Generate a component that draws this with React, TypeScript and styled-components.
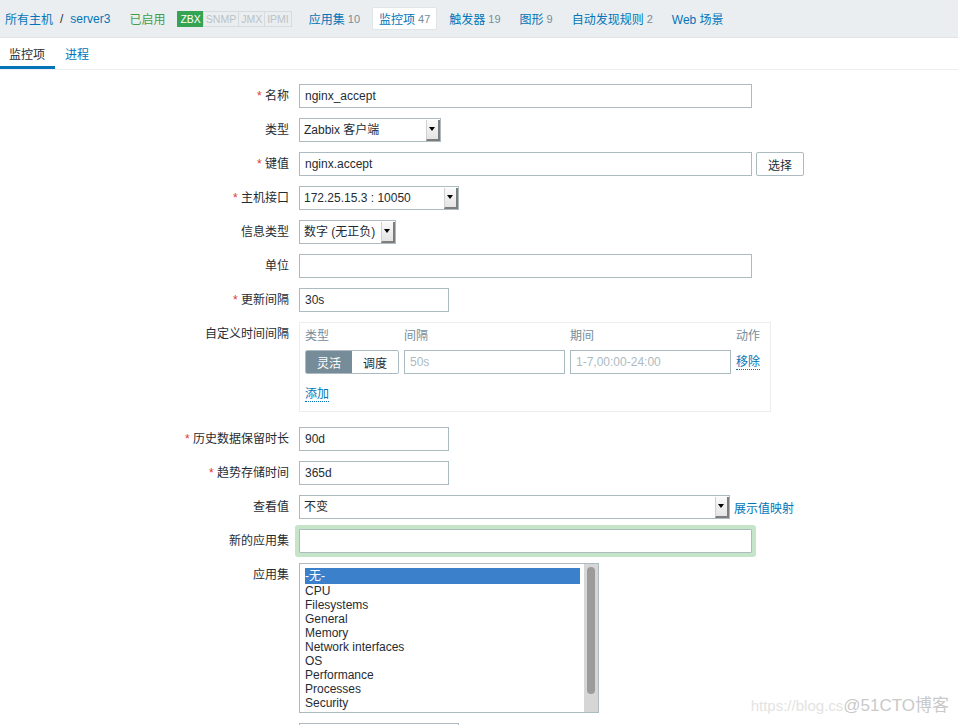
import React from 'react';
import styled, { createGlobalStyle, css } from 'styled-components';

const TEXT = '#1f2c33';
const LINK = '#0275b8';
const MUTED = '#768d99';
const BORDER = '#acbbc2';

const GlobalStyle = createGlobalStyle`
  body {
    margin: 0;
    background: #fff;
    font-family: "Liberation Sans", "Noto Sans CJK SC", sans-serif;
    font-size: 12px;
    color: ${TEXT};
  }
`;

const Page = styled.div`
  position: relative;
  width: 958px;
  height: 725px;
  overflow: hidden;
`;

const TopBar = styled.div`
  display: flex;
  align-items: center;
  height: 37px;
  padding: 0 5px;
  background: #ebeef0;
  border-bottom: 1px solid #dfe4e7;
`;

const Crumbs = styled.div`
  display: flex;
  align-items: center;
  gap: 7px;
`;

const Link = styled.a`
  color: ${LINK};
  text-decoration: none;
  cursor: pointer;
`;

const Status = styled.span`
  margin-left: 19px;
  color: #429e47;
`;

const BadgeGroup = styled.div`
  display: flex;
  margin-left: 12px;
  height: 16px;
`;

const Badge = styled.span<{ $on?: boolean }>`
  display: flex;
  align-items: center;
  padding: 0 2px;
  font-size: 10.5px;
  border: 1px solid #d5dbde;
  margin-left: -1px;
  color: #b8c3c9;
  ${(p) => p.$on && css`
    background: #34a352;
    border-color: #34a352;
    color: #fff;
    margin-left: 0;
  `}
`;

const Nav = styled.div`
  display: flex;
  align-items: center;
  gap: 5px;
  margin-left: 10px;
`;

const NavItem = styled.a<{ $selected?: boolean }>`
  display: flex;
  align-items: center;
  height: 21px;
  padding: 0 6px;
  border: 1px solid transparent;
  border-radius: 2px;
  color: ${LINK};
  ${(p) => p.$selected && css`
    background: #fff;
    border-color: #dfe4e7;
  `}
`;

const Count = styled.span`
  margin-left: 3px;
  font-size: 11px;
  color: ${MUTED};
`;

const TabBar = styled.div`
  display: flex;
  height: 31px;
  border-bottom: 1px solid #ebeef0;
`;

const Tab = styled.a<{ $active?: boolean }>`
  display: flex;
  align-items: center;
  padding: 0 10px 0 9px;
  margin-right: 1px;
  color: ${(p) => (p.$active ? TEXT : LINK)};
  border-bottom: 3px solid ${(p) => (p.$active ? LINK : 'transparent')};
  padding-top: 3px;
`;

const Form = styled.div`
  display: grid;
  grid-template-columns: 289px 1fr;
  column-gap: 10px;
  row-gap: 10px;
  padding-top: 14px;
`;

const Label = styled.div<{ $required?: boolean }>`
  text-align: right;
  line-height: 24px;
  white-space: nowrap;
  &::before {
    content: ${(p) => (p.$required ? '"* "' : 'none')};
    color: #e33734;
  }
`;

const Field = styled.div`
  display: flex;
  align-items: center;
  gap: 4px;
  min-height: 24px;
`;

const Input = styled.div<{ $w: number; $muted?: boolean; $glow?: boolean }>`
  box-sizing: border-box;
  width: ${(p) => p.$w}px;
  height: 24px;
  line-height: 22px;
  padding: 0 5px;
  border: 1px solid ${BORDER};
  background: #fff;
  color: ${(p) => (p.$muted ? BORDER : TEXT)};
  white-space: nowrap;
  ${(p) => p.$glow && css`
    box-shadow: 0 0 0 4px #c5e4c8;
    border-radius: 1px;
  `}
`;

const Button = styled.button`
  box-sizing: border-box;
  height: 24px;
  width: 48px;
  padding: 0;
  border: 1px solid ${BORDER};
  border-radius: 2px;
  background: #fff;
  color: ${TEXT};
  font: inherit;
`;

const SelectBox = styled.div<{ $w: number }>`
  box-sizing: border-box;
  display: flex;
  width: ${(p) => p.$w}px;
  height: 24px;
  border: 1px solid ${BORDER};
  background: #fff;
`;

const SelectText = styled.span`
  flex: 1;
  line-height: 22px;
  padding-left: 4px;
  white-space: nowrap;
`;

const SelectArrow = styled.span`
  position: relative;
  width: 11px;
  margin: 1px 0 0;
  background: linear-gradient(#fafafa, #e4e4e4);
  border-left: 1px solid #d0d0d0;
  border-right: 2px solid #7d7d7d;
  border-bottom: 2px solid #7d7d7d;
  &::after {
    content: '';
    position: absolute;
    left: 2px;
    top: 7px;
    border-left: 3.5px solid transparent;
    border-right: 3.5px solid transparent;
    border-top: 4px solid #000;
  }
`;

const DottedLink = styled.a`
  color: ${LINK};
  border-bottom: 1px dotted ${LINK};
  line-height: 14px;
  cursor: pointer;
`;

const IntervalBox = styled.div`
  box-sizing: border-box;
  width: 472px;
  height: 90px;
  margin-bottom: 5px;
  padding: 5px 5px 0;
  border: 1px solid #ebeef0;
`;

const IntervalGrid = styled.div`
  display: grid;
  grid-template-columns: 94px 161px 161px 1fr;
  column-gap: 5px;
  row-gap: 5px;
  align-items: center;
`;

const HeadCell = styled.div`
  color: ${MUTED};
  line-height: 17px;
`;

const Segmented = styled.div`
  display: flex;
  height: 24px;
  border: 1px solid ${BORDER};
  box-sizing: border-box;
  border-radius: 2px;
  overflow: hidden;
`;

const Segment = styled.span<{ $on?: boolean }>`
  flex: 1;
  display: flex;
  align-items: center;
  justify-content: center;
  background: ${(p) => (p.$on ? MUTED : '#fff')};
  color: ${(p) => (p.$on ? '#fff' : TEXT)};
`;

const AddRow = styled.div`
  margin-top: 13px;
`;

const ListBox = styled.div`
  box-sizing: border-box;
  display: flex;
  width: 300px;
  height: 150px;
  border: 1px solid ${BORDER};
  background: #fff;
`;

const Options = styled.div`
  flex: 1;
  padding: 4px 4px 0 5px;
  overflow: hidden;
`;

const Option = styled.div<{ $selected?: boolean }>`
  line-height: 14px;
  white-space: nowrap;
  ${(p) => p.$selected && css`
    line-height: 16px;
    background: #3a80cb;
    color: #fff;
  `}
`;

const Track = styled.div`
  width: 14px;
  background: #d6d6d6;
  padding: 3px 3px;
  box-sizing: border-box;
`;

const Thumb = styled.div`
  height: 127px;
  border-radius: 4px;
  background: #9b9b9b;
`;

const Watermark = styled.div`
  position: absolute;
  right: 9px;
  bottom: 9px;
  display: flex;
  align-items: baseline;
  font-size: 15px;
  color: #e3e3e3;
`;

const WatermarkBrand = styled.span`
  font-size: 17px;
  color: #c9c9c9;
  text-shadow: 0 0 2px #fff;
`;

const navItems = [
  { label: '应用集', count: 10 },
  { label: '监控项', count: 47, selected: true },
  { label: '触发器', count: 19 },
  { label: '图形', count: 9 },
  { label: '自动发现规则', count: 2 },
  { label: 'Web 场景' },
];

const applications = [
  '-无-', 'CPU', 'Filesystems', 'General', 'Memory',
  'Network interfaces', 'OS', 'Performance', 'Processes', 'Security',
];

const Select = ({ w, value }: { w: number, value: string }) => (
  <SelectBox $w={w}>
    <SelectText>{value}</SelectText>
    <SelectArrow />
  </SelectBox>
);

const App = function () {
  return (
    <Page>
      <GlobalStyle />
      <TopBar>
        <Crumbs>
          <Link>所有主机</Link>
          <span>/</span>
          <Link>server3</Link>
        </Crumbs>
        <Status>已启用</Status>
        <BadgeGroup>
          <Badge $on>ZBX</Badge>
          <Badge>SNMP</Badge>
          <Badge>JMX</Badge>
          <Badge>IPMI</Badge>
        </BadgeGroup>
        <Nav>
          {navItems.map((item) => (
            <NavItem key={item.label} $selected={item.selected}>
              {item.label}
              {item.count !== undefined && <Count>{item.count}</Count>}
            </NavItem>
          ))}
        </Nav>
      </TopBar>
      <TabBar>
        <Tab $active>监控项</Tab>
        <Tab>进程</Tab>
      </TabBar>
      <Form>
        <Label $required>名称</Label>
        <Field><Input $w={453}>nginx_accept</Input></Field>

        <Label>类型</Label>
        <Field><Select w={142} value="Zabbix 客户端" /></Field>

        <Label $required>键值</Label>
        <Field>
          <Input $w={453}>nginx.accept</Input>
          <Button>选择</Button>
        </Field>

        <Label $required>主机接口</Label>
        <Field><Select w={160} value="172.25.15.3 : 10050" /></Field>

        <Label>信息类型</Label>
        <Field><Select w={97} value="数字 (无正负)" /></Field>

        <Label>单位</Label>
        <Field><Input $w={453} /></Field>

        <Label $required>更新间隔</Label>
        <Field><Input $w={150}>30s</Input></Field>

        <Label>自定义时间间隔</Label>
        <div>
          <IntervalBox>
            <IntervalGrid>
              <HeadCell>类型</HeadCell>
              <HeadCell>间隔</HeadCell>
              <HeadCell>期间</HeadCell>
              <HeadCell>动作</HeadCell>
              <Segmented>
                <Segment $on>灵活</Segment>
                <Segment>调度</Segment>
              </Segmented>
              <Input $w={161} $muted>50s</Input>
              <Input $w={161} $muted>1-7,00:00-24:00</Input>
              <div><DottedLink>移除</DottedLink></div>
            </IntervalGrid>
            <AddRow><DottedLink>添加</DottedLink></AddRow>
          </IntervalBox>
        </div>

        <Label $required>历史数据保留时长</Label>
        <Field><Input $w={150}>90d</Input></Field>

        <Label $required>趋势存储时间</Label>
        <Field><Input $w={150}>365d</Input></Field>

        <Label>查看值</Label>
        <Field>
          <Select w={431} value="不变" />
          <Link>展示值映射</Link>
        </Field>

        <Label>新的应用集</Label>
        <Field><Input $w={453} $glow /></Field>

        <Label>应用集</Label>
        <Field>
          <ListBox>
            <Options>
              {applications.map((name, i) => (
                <Option key={name} $selected={i === 0}>{name}</Option>
              ))}
            </Options>
            <Track><Thumb /></Track>
          </ListBox>
        </Field>

        <Label />
        <Field><Input $w={160} /></Field>
      </Form>
      <Watermark>
        <span>https://blog.cs</span>
        <WatermarkBrand>@51CTO博客</WatermarkBrand>
      </Watermark>
    </Page>
  );
};

export default App;
